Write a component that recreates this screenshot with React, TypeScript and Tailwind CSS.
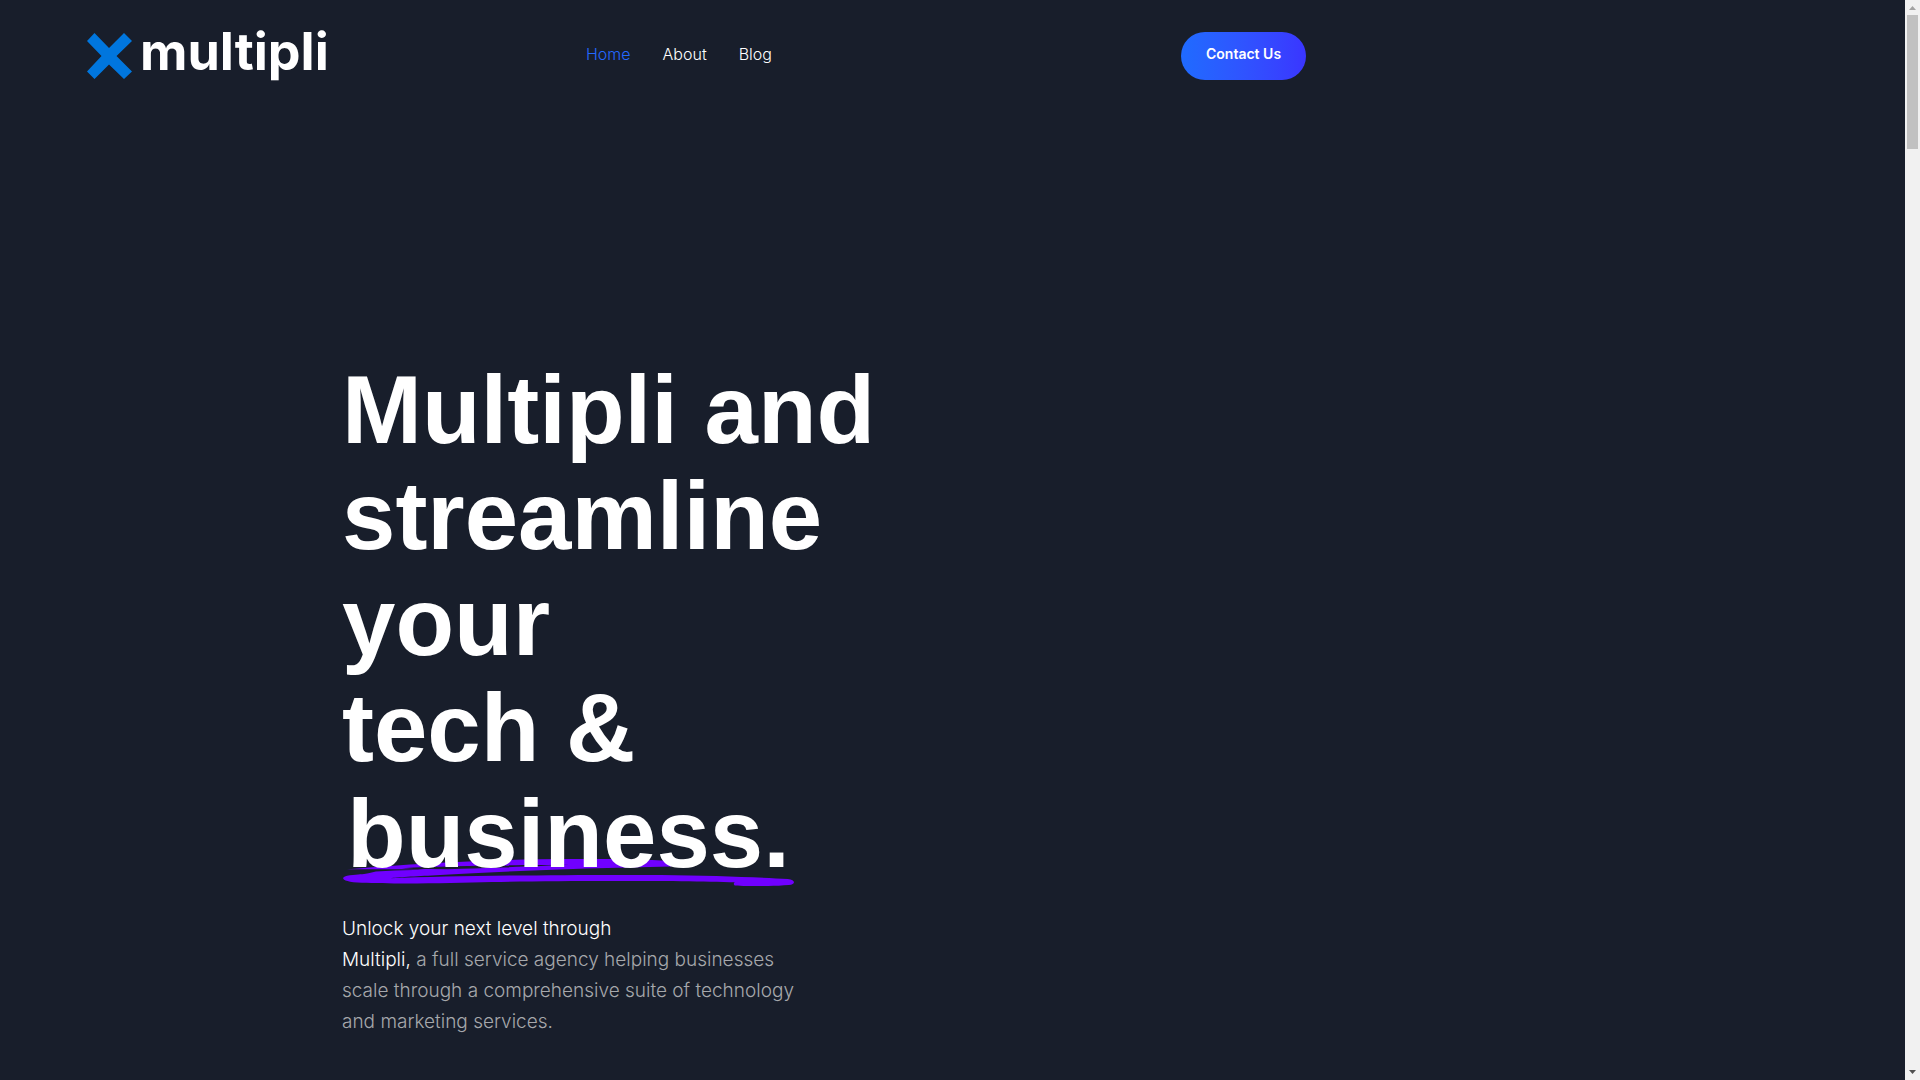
type NavLinkProps = {
  text: string,
  active?: boolean
}

const links: NavLinkProps[] = [
  { text: "Home", active: true },
  { text: "About" },
  { text: "Blog" },
];

function NavLink({ text, active }: NavLinkProps) {
  return (
    <a href="#" className={active ? "text-[#2468ff]" : "text-white"}>
      {text}
    </a>
  );
}

function Logo() {
  return (
    <a href="#" className="flex items-start gap-2 h-12" aria-label="multipli">
      <svg viewBox="0 0 46 48" className="w-[46px] h-12 shrink-0" fill="#0076de">
        <path d="M8.500 1 23 16 38 1 46 9 30.500 24 46 39.500 38 47 23 32.500 8.500 47 1 39.500 15.500 24 1 9Z" />
      </svg>
      <span className="font-bold text-[52px] leading-10 text-white">multipli</span>
    </a>
  );
}

function Header() {
  return (
    <header className="grid grid-cols-[500fr_595fr_724fr] items-start pl-[86px] pt-8 h-28">
      <Logo />
      <nav className="flex gap-8 pt-2 text-base leading-7 font-light">
        {links.map((link) => (
          <NavLink key={link.text} {...link} />
        ))}
      </nav>
      <button className="justify-self-start h-12 px-[25px] pb-1 rounded-full bg-linear-to-r from-[#1f6bff] to-[#3a35ff] text-sm font-semibold text-white">
        Contact Us
      </button>
    </header>
  );
}

function Scribble() {
  return (
    <svg
      viewBox="0 0 454 28"
      preserveAspectRatio="none"
      className="absolute left-0 bottom-px w-full h-7"
      fill="#7000ff"
      aria-hidden="true"
    >
      <path
        fillRule="evenodd"
        d="M5 11.300C55 7 120 2.500 200 1.300C250 .8 300 1 328 3L330 8.500C240 10 150 14 90 17.500C70 18.500 52 19.500 48 20.300C120 17.500 240 16.500 320 17C370 17.500 420 19.500 447 21C455 22 455 26 448 27C430 28.500 405 28.300 394 27.500C392 26.500 393 24.500 394 24.300C340 22.500 220 22.500 150 24C110 25.500 50 26 20 24.800C-2 24 -3 18.500 8 17.300C25 16 28 15 34 13.500C60 12 85 11.500 106 11C80 11 40 11.500 5 11.300ZM60 10.200C80 12 100 11.800 120 10.800C160 9.500 200 8 228 6.800C180 7 110 7.800 60 10.200Z"
      />
    </svg>
  );
}

function Hero() {
  return (
    <main className="w-full max-w-[1221px] mx-auto pt-[245px] pb-10">
      <h1 className="max-w-[560px] font-['Liberation_Sans',sans-serif] font-bold text-8xl leading-[106px] text-white">
        Multipli and streamline your
        <br />
        tech &amp;
        <br />
        <span className="relative inline-block px-[5px]">
          <Scribble />
          <span className="relative">business.</span>
        </span>
      </h1>
      <p className="mt-[26px] max-w-[470px] text-[19px] leading-[31px] font-light text-[#a6a8ac]">
        <span className="block text-white">Unlock your next level through</span>
        <span className="text-white">Multipli,</span> a full service agency helping businesses scale through a
        comprehensive suite of technology and marketing services.
      </p>
    </main>
  );
}

function ScrollTrack() {
  return (
    <div className="fixed inset-y-0 right-0 w-[15px] bg-[#f1f1f1] flex flex-col items-center" aria-hidden="true">
      <svg viewBox="0 0 15 15" className="w-[15px] h-[15px]" fill="#a3a3a3">
        <path d="M4 10 7.500 6 11 10Z" />
      </svg>
      <div className="w-[11px] h-[134px] bg-[#c1c1c1]" />
      <svg viewBox="0 0 15 15" className="w-[15px] h-[15px] mt-auto" fill="#505050">
        <path d="M4 5 7.500 9 11 5Z" />
      </svg>
    </div>
  );
}

export default function App() {
  return (
    <div className="min-h-screen bg-[#181e2b] pr-[15px] font-['Inter',sans-serif]">
      <Header />
      <Hero />
      <ScrollTrack />
    </div>
  );
}
